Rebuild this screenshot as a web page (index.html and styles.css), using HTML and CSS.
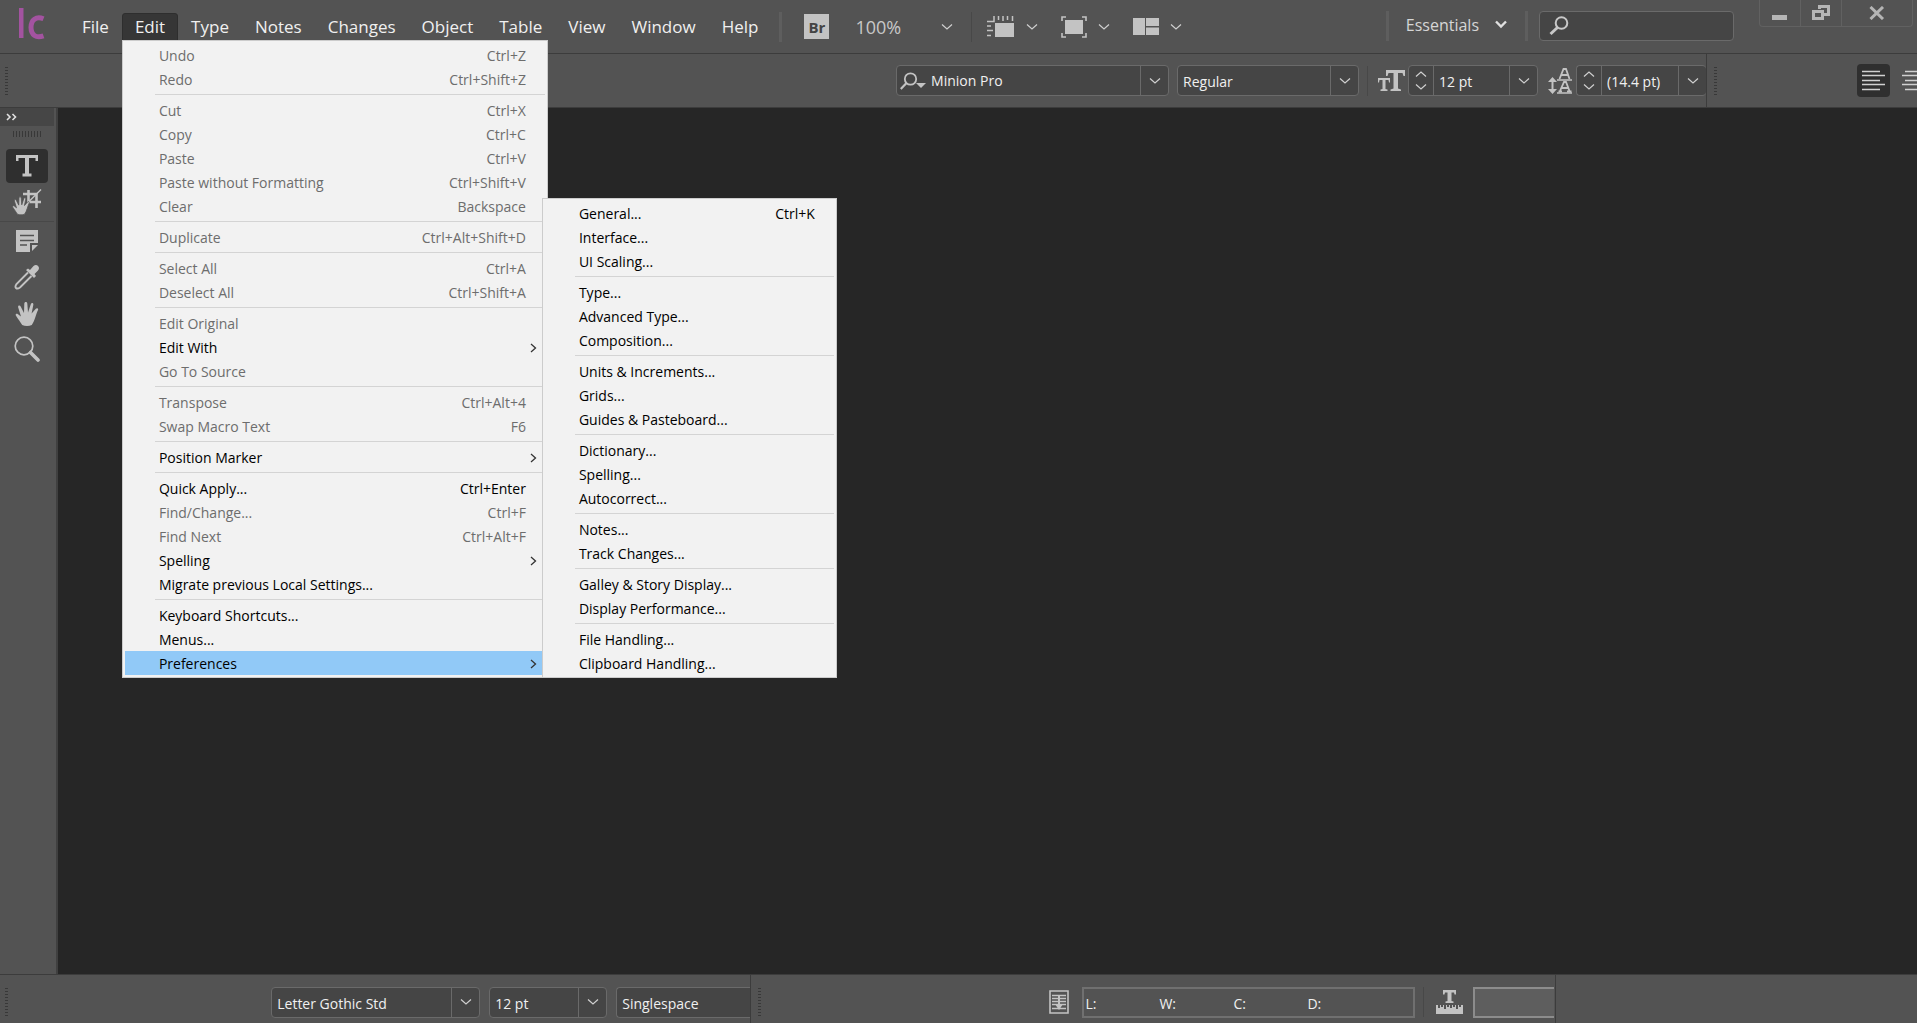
FILE: index.html
```html
<!DOCTYPE html>
<html lang="en">
<head>
<meta charset="utf-8">
<title>InCopy</title>
<link rel="stylesheet" href="styles.css">
</head>
<body>
<svg class="defs" aria-hidden="true">
  <symbol id="chev" viewBox="0 0 12 8"><path d="M1 1.5l5 4.500 5-4.500" fill="none" stroke="#d0d0d0" stroke-width="1.200"/></symbol>
  <symbol id="chev-up" viewBox="0 0 12 8"><path d="M1 6.500L6 2l5 4.500" fill="none" stroke="#d0d0d0" stroke-width="1.200"/></symbol>
  <symbol id="sub" viewBox="0 0 7 10"><path d="M1 1l4.500 4L1 9" fill="none" stroke="#333" stroke-width="1.300"/></symbol>
  <symbol id="hand" viewBox="0 0 24 25"><path d="M7.200 24C5.500 21.500 3.500 18.500 1 14.800C0 13 1.600 12.200 3 13.200L6 15.600L3.200 6.500C2.600 4.400 5 3.800 5.800 5.700L9 12L9.300 2.500C9.300.4 12 .4 12.300 2.400L13 11.600L15.800 3.200C16.500 1.300 18.800 2 18.300 4L16.600 12.600L20.800 7.800C22 6.500 23.800 7.700 22.900 9.300C21 13 19.800 20 16.800 24C14 25.300 10 25.300 7.200 24Z" fill="#c3c3c3"/></symbol>
</svg>
<header class="appbar">
  <div class="logo" aria-label="InCopy"><svg width="28" height="34" viewBox="0 0 28 34"><path d="M2 1H6.500V31H2Z" fill="#a353a0"/><path d="M26.500 11.700C19 8.700 14 13 14 20.300C14 28 19 31.500 26.500 28.800" fill="none" stroke="#a353a0" stroke-width="5"/></svg></div>
  <ul class="menubar">
    <li><button>File</button></li>
    <li class="open"><button aria-expanded="true">Edit</button>
      <ul class="menu edit-menu">
        <li><button disabled>Undo<kbd>Ctrl+Z</kbd></button></li>
        <li><button disabled>Redo<kbd>Ctrl+Shift+Z</kbd></button></li>
        <li class="rule"></li>
        <li><button disabled>Cut<kbd>Ctrl+X</kbd></button></li>
        <li><button disabled>Copy<kbd>Ctrl+C</kbd></button></li>
        <li><button disabled>Paste<kbd>Ctrl+V</kbd></button></li>
        <li><button disabled>Paste without Formatting<kbd>Ctrl+Shift+V</kbd></button></li>
        <li><button disabled>Clear<kbd>Backspace</kbd></button></li>
        <li class="rule"></li>
        <li><button disabled>Duplicate<kbd>Ctrl+Alt+Shift+D</kbd></button></li>
        <li class="rule"></li>
        <li><button disabled>Select All<kbd>Ctrl+A</kbd></button></li>
        <li><button disabled>Deselect All<kbd>Ctrl+Shift+A</kbd></button></li>
        <li class="rule"></li>
        <li><button disabled>Edit Original</button></li>
        <li><button class="parent">Edit With<svg class="arrow"><use href="#sub"/></svg></button></li>
        <li><button disabled>Go To Source</button></li>
        <li class="rule"></li>
        <li><button disabled>Transpose<kbd>Ctrl+Alt+4</kbd></button></li>
        <li><button disabled>Swap Macro Text<kbd>F6</kbd></button></li>
        <li class="rule"></li>
        <li><button class="parent">Position Marker<svg class="arrow"><use href="#sub"/></svg></button></li>
        <li class="rule"></li>
        <li><button>Quick Apply...<kbd>Ctrl+Enter</kbd></button></li>
        <li><button disabled>Find/Change...<kbd>Ctrl+F</kbd></button></li>
        <li><button disabled>Find Next<kbd>Ctrl+Alt+F</kbd></button></li>
        <li><button class="parent">Spelling<svg class="arrow"><use href="#sub"/></svg></button></li>
        <li><button>Migrate previous Local Settings...</button></li>
        <li class="rule"></li>
        <li><button>Keyboard Shortcuts...</button></li>
        <li><button>Menus...</button></li>
        <li class="current"><button class="parent">Preferences<svg class="arrow"><use href="#sub"/></svg></button>
          <ul class="menu submenu">
            <li><button>General...<kbd>Ctrl+K</kbd></button></li>
            <li><button>Interface...</button></li>
            <li><button>UI Scaling...</button></li>
            <li class="rule"></li>
            <li><button>Type...</button></li>
            <li><button>Advanced Type...</button></li>
            <li><button>Composition...</button></li>
            <li class="rule"></li>
            <li><button>Units &amp; Increments...</button></li>
            <li><button>Grids...</button></li>
            <li><button>Guides &amp; Pasteboard...</button></li>
            <li class="rule"></li>
            <li><button>Dictionary...</button></li>
            <li><button>Spelling...</button></li>
            <li><button>Autocorrect...</button></li>
            <li class="rule"></li>
            <li><button>Notes...</button></li>
            <li><button>Track Changes...</button></li>
            <li class="rule"></li>
            <li><button>Galley &amp; Story Display...</button></li>
            <li><button>Display Performance...</button></li>
            <li class="rule"></li>
            <li><button>File Handling...</button></li>
            <li><button>Clipboard Handling...</button></li>
          </ul>
        </li>
      </ul>
    </li>
    <li><button>Type</button></li>
    <li><button>Notes</button></li>
    <li><button>Changes</button></li>
    <li><button>Object</button></li>
    <li><button>Table</button></li>
    <li><button>View</button></li>
    <li><button>Window</button></li>
    <li><button>Help</button></li>
  </ul>
  <div class="viewtools">
    <span class="bar"></span>
    <button class="bridge">Br</button>
    <button class="zoom"><span>100%</span><svg class="chev"><use href="#chev"/></svg></button>
    <span class="line"></span>
    <button class="tool" aria-label="View options"><svg width="28" height="23" viewBox="0 0 28 23"><path d="M8 8H27V22H8Z" fill="#c3c3c3"/><path d="M7 1V6.500H0M11.500 1V5M16 1V6M20.500 1V5M25.500 1V6M0 11H4M0 15.500H6M0 20.500H4" stroke="#c3c3c3" stroke-width="1.500" fill="none"/></svg><svg class="chev"><use href="#chev"/></svg></button>
    <button class="tool" aria-label="Screen mode"><svg width="26" height="22" viewBox="0 0 26 22"><path d="M4 4H22V18H4Z" fill="#c3c3c3"/><path d="M1 5V1H5M21 1H25V5M25 17V21H21M5 21H1V17" stroke="#c3c3c3" stroke-width="1.600" fill="none"/></svg><svg class="chev"><use href="#chev"/></svg></button>
    <button class="tool" aria-label="Arrange documents"><svg width="26" height="18" viewBox="0 0 26 18"><path d="M0 0H12V17H0ZM13 0H26V8H13ZM13 9.500H26V17H13Z" fill="#c3c3c3"/></svg><svg class="chev"><use href="#chev"/></svg></button>
  </div>
  <div class="workspace">
    <span class="bar"></span>
    <button class="essentials">Essentials<svg width="12" height="9" viewBox="0 0 12 9"><path d="M1 1.500l5 5 5-5" fill="none" stroke="#e0e0e0" stroke-width="2.400"/></svg></button>
    <span class="bar"></span>
    <label class="search"><svg width="20" height="20" viewBox="0 0 20 20"><circle cx="12.500" cy="7" r="5.800" fill="none" stroke="#c8c8c8" stroke-width="2"/><path d="M8.500 11.500L1.500 18" stroke="#c8c8c8" stroke-width="3"/></svg><input type="search" aria-label="Search"></label>
  </div>
  <div class="wincontrols">
    <button aria-label="Minimize"><svg width="16" height="16" viewBox="0 0 16 16"><path d="M0 10H15V15H0Z" fill="#b5b5b5"/></svg></button>
    <button aria-label="Restore"><svg width="18" height="16" viewBox="0 0 18 16"><path d="M7.500 4V1.500H16.500V9.500H12" fill="none" stroke="#b5b5b5" stroke-width="3"/><path d="M1.500 6.500H10.500V13.500H1.500Z" fill="#535353" stroke="#b5b5b5" stroke-width="3"/></svg></button>
    <button class="close" aria-label="Close"><svg width="16" height="14" viewBox="0 0 16 14"><path d="M1.500 1L14 13M14 1L1.500 13" stroke="#b5b5b5" stroke-width="3"/></svg></button>
  </div>
</header>
<div class="controlbar">
  <section class="type-controls">
    <span class="grip"></span>
    <div class="combo font"><svg width="26" height="18" viewBox="0 0 26 18"><circle cx="10.500" cy="7" r="5.700" fill="none" stroke="#c3c3c3" stroke-width="1.800"/><path d="M6.500 11L.8 17" stroke="#c3c3c3" stroke-width="2.200"/><path d="M16 11H26L21 16Z" fill="#c3c3c3"/></svg><input type="text" value="Minion Pro" aria-label="Font"><button aria-label="Font list"><svg class="chev"><use href="#chev"/></svg></button></div>
    <div class="combo style"><select aria-label="Font style"><option>Regular</option></select><span class="drop"><svg class="chev"><use href="#chev"/></svg></span></div>
    <span class="line"></span>
    <div class="field">
      <svg width="27" height="22" viewBox="0 0 27 22"><path d="M8 0H27V6H25.500L24.500 3H20V18.500L23 19.500V21H12.500V19.500L15.500 18.500V3H10.500L9.500 6H8Z" fill="#c3c3c3"/><path d="M0 8H12V12.500H11L10.500 10H7.500V19L9.500 19.500V21H2.500V19.500L4.500 19V10H1.500L1 12.500H0Z" fill="#c3c3c3"/></svg>
      <div class="combo spin"><div class="steps"><button aria-label="Increase size"><svg class="chev"><use href="#chev-up"/></svg></button><button aria-label="Decrease size"><svg class="chev"><use href="#chev"/></svg></button></div><input type="text" value="12 pt" aria-label="Font size"><button aria-label="Size list"><svg class="chev"><use href="#chev"/></svg></button></div>
    </div>
    <div class="field">
      <svg width="25" height="26" viewBox="0 0 25 26"><path d="M4.500 11V24" stroke="#c3c3c3" stroke-width="2"/><path d="M4.500 9L9 14H0ZM4.500 26L0 21H9Z" fill="#c3c3c3"/><path d="M9 12H24M9 25H24" stroke="#c3c3c3" stroke-width="1.400"/><path d="M11.500 11L15.500 1H18L21.500 11M13 7H20M10.500 23.500H14M19 23.500H23.500M12 23L16 14H18L21.500 23M13.500 20H20" fill="none" stroke="#c3c3c3" stroke-width="1.800"/></svg>
      <div class="combo spin last"><div class="steps"><button aria-label="Increase leading"><svg class="chev"><use href="#chev-up"/></svg></button><button aria-label="Decrease leading"><svg class="chev"><use href="#chev"/></svg></button></div><input type="text" value="(14.4 pt)" aria-label="Leading"><button aria-label="Leading list"><svg class="chev"><use href="#chev"/></svg></button></div>
    </div>
  </section>
  <section class="align-controls">
    <span class="grip"></span>
    <button class="align on" aria-label="Align left"><svg width="23" height="21" viewBox="0 0 23 21"><path d="M0 1.500H18M0 5.500H23M0 10.500H18M0 14.500H23M0 19.500H18" stroke="#d0d0d0" stroke-width="1.500"/></svg></button>
    <button class="align" aria-label="Align center"><svg width="23" height="21" viewBox="0 0 23 21"><path d="M3 1.500H20M0 5.500H23M3 10.500H20M0 14.500H23M3 19.500H20" stroke="#d0d0d0" stroke-width="1.500"/></svg></button>
  </section>
</div>
<div class="work">
  <aside class="toolbox">
    <button class="expand" aria-label="Expand tools"><svg width="11" height="8" viewBox="0 0 11 8"><path d="M1 1l3 3-3 3M6.500 1l3 3-3 3" fill="none" stroke="#e0e0e0" stroke-width="1.600"/></svg></button>
    <span class="hgrip"></span>
    <button class="on" aria-label="Type tool"><svg width="22" height="22" viewBox="0 0 22 22"><path d="M0 0H22V6H19.500V3H13V18.500H15.500V21.500H6.500V18.500H9V3H2.500V6H0Z" fill="#c3c3c3"/></svg></button>
    <button aria-label="Position tool"><svg width="30" height="26" viewBox="0 0 30 26"><path d="M16.500 1V13H29M11 5H24.500V19" fill="none" stroke="#c3c3c3" stroke-width="2.600"/><path d="M29 .5L17 12.500" stroke="#c3c3c3" stroke-width="1.400"/><use href="#hand" x="0" y="7" width="18" height="19" stroke="#535353" stroke-width="1"/></svg></button>
    <span class="rule"></span>
    <button aria-label="Note tool"><svg width="22" height="22" viewBox="0 0 22 22"><path d="M0 0H22V13H14V22H0Z" fill="#c3c3c3"/><path d="M16 15H22L16 21Z" fill="#c3c3c3"/><path d="M4 5.500H18M4 10.500H18M4 15H11" stroke="#535353" stroke-width="1.500"/></svg></button>
    <button aria-label="Eyedropper tool"><svg width="26" height="26" viewBox="0 0 26 26"><path d="M14 8.500L2.500 20C1.500 21.500 1 23 2 24C3 25 4.500 24.500 6 23.500L17.500 12" fill="none" stroke="#c3c3c3" stroke-width="1.900"/><path d="M12 6L14 4.500L16 6L19.500 2C22.500-1 27 3 24 6.500L20.500 10L22 12L20 14Z" fill="#c3c3c3"/></svg></button>
    <button aria-label="Hand tool"><svg width="24" height="25"><use href="#hand"/></svg></button>
    <button aria-label="Zoom tool"><svg width="26" height="26" viewBox="0 0 26 26"><circle cx="10" cy="10" r="8.800" fill="none" stroke="#c3c3c3" stroke-width="1.700"/><path d="M16.500 16.500L24 24" stroke="#c3c3c3" stroke-width="3.600" stroke-linecap="round"/></svg></button>
  </aside>
  <main class="canvas"></main>
</div>
<footer class="statusbar">
  <section class="galley">
    <span class="grip"></span>
    <div class="combo gfont"><select aria-label="Display font"><option>Letter Gothic Std</option></select><span class="drop"><svg class="chev"><use href="#chev"/></svg></span></div>
    <div class="combo gsize"><select aria-label="Display size"><option>12 pt</option></select><span class="drop"><svg class="chev"><use href="#chev"/></svg></span></div>
    <div class="combo gspace"><select aria-label="Line spacing"><option>Singlespace</option></select></div>
  </section>
  <section class="copyfit">
    <span class="grip"></span>
    <svg width="20" height="24" viewBox="0 0 20 24"><path d="M1 1H19V23H1Z" fill="none" stroke="#c3c3c3" stroke-width="1.600"/><path d="M3 5.500H17M3 8.500H17M3 11.500H17M3 14.500H17M3 18.500H17" stroke="#c3c3c3" stroke-width="1.500"/><path d="M10 5V16" stroke="#c3c3c3" stroke-width="2"/><path d="M6 14H14L10 20Z" fill="#c3c3c3"/></svg>
    <div class="counts"><span>L:</span><span>W:</span><span>C:</span><span>D:</span></div>
    <span class="line"></span>
    <svg width="27" height="25" viewBox="0 0 27 25"><path d="M7 0H20V4.500H18.500L18 2.500H15.500V11L17.500 11.500V13H9.500V11.500L11.500 11V2.500H9L8.500 4.500H7Z" fill="#c3c3c3"/><path d="M0 15H2V18H4V15H5V17H7V15H8V19H10V15H11V17H13V15H14V18H16V15H17V17H19V15H20V19H22V15H23V17H25V15H27V24H0Z" fill="#c3c3c3"/></svg>
    <div class="progress"></div>
  </section>
  <section class="rest"></section>
</footer>
</body>
</html>
```
FILE: styles.css
```css
* { box-sizing: border-box; }
body {
  margin: 0;
  height: 100vh;
  display: flex;
  flex-direction: column;
  overflow: hidden;
  background: #535353;
  color: #f0f0f0;
  font: 14px/24px "Open Sans", "Noto Sans", sans-serif;
}
ul { list-style: none; margin: 0; padding: 0; }
button, input, select { font: inherit; color: inherit; background: none; border: 0; padding: 0; margin: 0; outline: 0; }
select { appearance: none; }
button { display: flex; align-items: center; }
svg { display: block; flex: none; }
.defs { position: absolute; width: 0; height: 0; }
.chev { width: 12px; height: 8px; }

.appbar { display: flex; align-items: center; height: 54px; border-bottom: 1px solid #3c3c3c; flex: none; }
.logo { width: 69px; padding: 0 0 6px 17px; }
.menubar { display: flex; font-size: 17px; }
.menubar > li { position: relative; }
.menubar > li > button { height: 28px; padding: 0 12px; border: 1px solid transparent; border-radius: 3px 3px 0 0; }
.menubar > .open > button { background: #363636; border-color: #2e2e2e; }

.menu { position: absolute; z-index: 2; background: #f2f2f2; border: 1px solid #ccc; color: #000; padding: 2px; font-size: 14px; }
.edit-menu { top: 27px; left: 0; width: 426px; }
.menu li { position: relative; }
.menu button { width: 100%; height: 24px; padding: 2px 19px 0 34px; justify-content: space-between; white-space: nowrap; }
.menu button:disabled { color: #6d6d6d; }
.menu kbd { font: inherit; }
.menu .parent { padding-right: 8px; }
.arrow { width: 7px; height: 10px; }
.menu .rule { height: 7px; padding: 3px 0 3px 30px; }
.menu .rule::before { content: ""; display: block; height: 1px; background: #d4d4d4; }
.current > button { background: #91c9f7; }
.submenu { bottom: -3px; left: 417px; width: 295px; }

.bar { width: 3px; height: 30px; background: #5e5e5e; }
.line { width: 1px; height: 30px; background: #484848; }
.viewtools { display: flex; align-items: center; margin-left: 8px; color: #c8c8c8; }
.bridge { width: 25px; height: 25px; margin: 0 26px 0 22px; justify-content: center; background: #c3c3c3; color: #444; font-weight: 700; font-size: 15px; }
.zoom { width: 98px; justify-content: space-between; font-size: 18px; margin-right: 18px; }
.tool { gap: 11px; margin-left: 15px; }
.tool + .tool { margin-left: 23px; }
.workspace { display: flex; align-items: center; margin-left: auto; padding-bottom: 2px; }
.essentials { gap: 16px; padding: 0 18px 2px 17px; font-size: 16px; color: #d6d6d6; }
.search { display: flex; align-items: center; width: 195px; height: 30px; margin-left: 11px; padding: 0 9px; background: #454545; border: 1px solid #6a6a6a; border-radius: 4px; }
.search input { flex: 1; min-width: 0; }
.wincontrols { display: flex; align-self: flex-start; margin: 0 4px 0 25px; border: 1px solid #616161; border-top: 0; border-radius: 0 0 4px 4px; }
.wincontrols button { width: 41px; height: 26px; justify-content: center; border-right: 1px solid #616161; }
.wincontrols .close { width: 70px; border: 0; }

.controlbar { display: flex; height: 54px; border-bottom: 1px solid #3c3c3c; flex: none; }
.controlbar section, .statusbar section { display: flex; align-items: center; min-width: 0; }
.type-controls { flex: 1707 1 0; justify-content: flex-end; border-right: 1px solid #3c3c3c; }
.align-controls { flex: 210 0 0; overflow: hidden; }
.grip { flex: none; width: 3px; height: 28px; margin: 0 auto 0 5px; background: repeating-linear-gradient(#383838 0 1px, transparent 1px 3px); }
.combo { display: flex; height: 31px; background: #454545; border: 1px solid #6a6a6a; border-radius: 4px; align-items: stretch; }
.combo input, .combo select { flex: 1; min-width: 0; padding-left: 5px; }
.combo select, .spin input { padding-top: 2px; }
.combo > button, .drop { display: flex; align-items: center; justify-content: center; width: 28px; border-left: 1px solid #6a6a6a; }
.font { width: 273px; margin-right: 8px; }
.font > svg { align-self: center; margin-left: 3px; }
.style { width: 182px; margin-right: 8px; }
.field { display: flex; align-items: center; gap: 3px; margin-left: 10px; }
.spin { width: 130px; }
.steps { display: flex; flex-direction: column; justify-content: space-evenly; align-items: center; width: 25px; border-right: 1px solid #6a6a6a; }
.last { border-right: 0; }
.align-controls .grip { margin-left: 7px; }
.align { width: 33px; height: 33px; justify-content: center; flex: none; border-radius: 4px; margin-right: 7px; }
.align + .align { margin-right: -13px; }
.on { background: #2f2f2f; }

.work { display: flex; flex: 1; min-height: 0; }
.toolbox { display: flex; flex-direction: column; align-items: center; gap: 2px; width: 58px; padding-right: 2px; border-right: 2px solid #404040; }
.toolbox button { width: 42px; height: 34px; justify-content: center; border-radius: 4px; }
.toolbox .expand { width: 100%; height: 18px; justify-content: flex-start; padding-left: 6px; background: #464646; border-radius: 0; }
.hgrip { width: 28px; height: 6px; margin: 3px 0 10px; background: repeating-linear-gradient(90deg, #383838 0 1px, transparent 1px 3px); }
.toolbox .rule { width: 100%; height: 1px; background: #484848; }
.canvas { flex: 1; background: #262626; }

.statusbar { display: flex; height: 49px; border-top: 1px solid #3c3c3c; flex: none; }
.statusbar section { border-right: 1px solid #3c3c3c; padding-top: 6px; }
.galley { flex: 751 1 0; }
.galley select { padding-top: 3px; }
.gfont { width: 209px; margin-right: 9px; }
.gsize { width: 118px; margin-right: 9px; }
.gspace { width: 134px; border-right: 0; border-radius: 4px 0 0 4px; }
.copyfit { flex: 805 1 0; }
.copyfit .grip { margin-left: 7px; }
.counts { display: flex; width: 333px; height: 31px; margin: 0 8px 0 13px; padding: 3px 0 0 1px; border: 2px solid #707070; }
.counts span { width: 74px; }
.copyfit .line { margin-right: 12px; }
.progress { width: 81px; height: 31px; margin: 0 1px 0 10px; background: #5e5e5e; border: 2px solid #8c8c8c; border-right: 0; }
.statusbar .rest { flex: 361 1 0; border: 0; }
```
